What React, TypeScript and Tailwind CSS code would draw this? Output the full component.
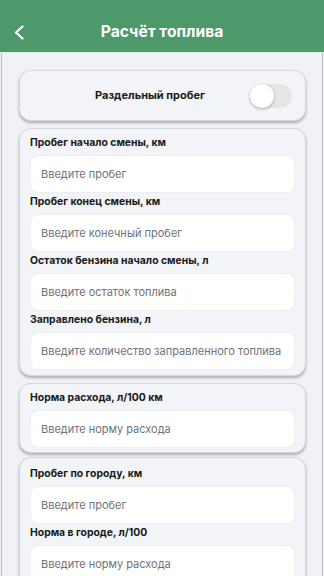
import React from "react";

function Field({ label, placeholder }: { label: string; placeholder: string }) {
  return (
    <div className="flex flex-col">
      <div className="text-[10.4px] leading-[18px] font-bold text-[#1a1a1a] mb-[3px] whitespace-nowrap">{label}</div>
      <div className="h-[38px] bg-white rounded-[8px] border border-[#eceef1] flex items-center px-[10px] text-[11px] text-[#6f7276] whitespace-nowrap">
        {placeholder}
      </div>
    </div>
  );
}

function Card({ children, className = "" }: { children: React.ReactNode; className?: string }) {
  return (
    <div
      className={
        "bg-[#f2f4f7] border border-[#d3d6da] rounded-[12px] shadow-[0_2px_3px_rgba(0,0,0,0.28)] pl-[10px] pr-[10px] " +
        className
      }
    >
      {children}
    </div>
  );
}

export default function App() {
  return (
    <div className="w-[324px] h-[576px] overflow-hidden bg-[#f0f2f5]" style={{ fontFamily: "Inter, 'Noto Sans', sans-serif" }}>
      <div className="h-[52px] bg-[#4d996b] flex items-center relative">
        <svg className="absolute left-[13px] top-[25px]" width="13" height="15" viewBox="0 0 13 15" fill="none">
          <path d="M9.5 1.5 L3 7.5 L9.5 13.5" stroke="white" strokeWidth="2.3" strokeLinecap="round" strokeLinejoin="round" />
        </svg>
        <div className="w-full text-center text-white font-bold text-[15.6px] pt-[12px]">Расчёт топлива</div>
      </div>
      <div className="h-[1px] bg-[#e6ece8]" />
      <div className="mx-[1px] border-x border-[#b9bcc0] h-[600px] pl-[17px] pr-[16px] pt-[17px] flex flex-col">
        <Card className="h-[51px] flex items-center justify-between !px-0">
          <div className="flex-1 text-center text-[11px] font-bold text-[#1a1a1a] pl-[30px]">Раздельный пробег</div>
          <div className="w-[42px] h-[24px] rounded-full bg-[#e4e5e7] mr-[13px] relative">
            <div className="absolute left-0 top-0 w-[24px] h-[24px] rounded-full bg-white shadow-[0_1px_3px_rgba(0,0,0,0.3)]" />
          </div>
        </Card>
        <Card className="mt-[7px] pt-[5px] pb-[5px] flex flex-col">
          <Field label="Пробег начало смены, км" placeholder="Введите пробег" />
          <Field label="Пробег конец смены, км" placeholder="Введите конечный пробег" />
          <Field label="Остаток бензина начало смены, л" placeholder="Введите остаток топлива" />
          <Field label="Заправлено бензина, л" placeholder="Введите количество заправленного топлива" />
        </Card>
        <Card className="mt-[7px] pt-[5px] pb-[4px]">
          <Field label="Норма расхода, л/100 км" placeholder="Введите норму расхода" />
        </Card>
        <Card className="mt-[4px] pt-[7px] pb-[6px]">
          <Field label="Пробег по городу, км" placeholder="Введите пробег" />
          <Field label="Норма в городе, л/100" placeholder="Введите норму расхода" />
        </Card>
      </div>
    </div>
  );
}
